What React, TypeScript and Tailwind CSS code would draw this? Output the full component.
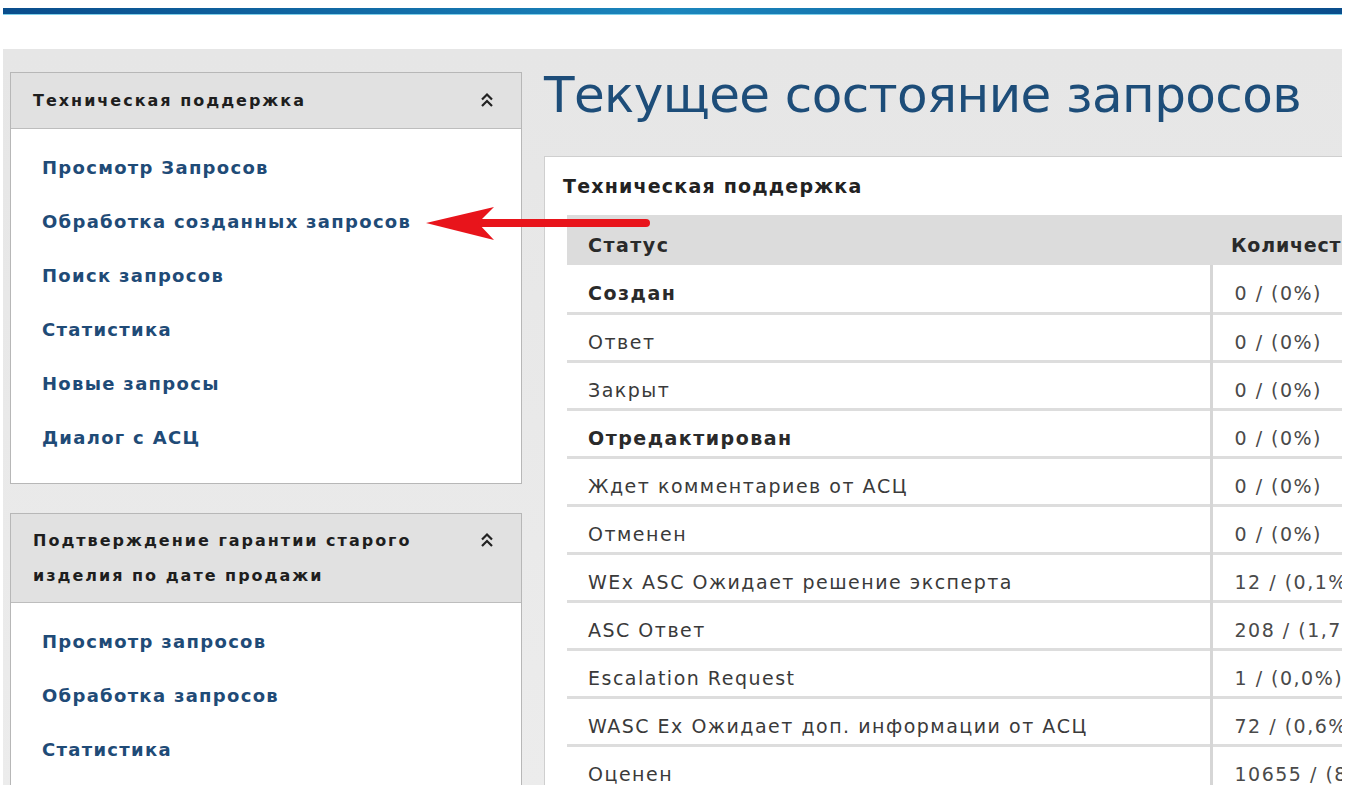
import React from 'react';

const supportLinks = [
  'Просмотр Запросов',
  'Обработка созданных запросов',
  'Поиск запросов',
  'Статистика',
  'Новые запросы',
  'Диалог с АСЦ',
];

const warrantyLinks = ['Просмотр запросов', 'Обработка запросов', 'Статистика'];

const rows: { status: string; count: string; bold?: boolean }[] = [
  { status: 'Создан', count: '0 / (0%)', bold: true },
  { status: 'Ответ', count: '0 / (0%)' },
  { status: 'Закрыт', count: '0 / (0%)' },
  { status: 'Отредактирован', count: '0 / (0%)', bold: true },
  { status: 'Ждет комментариев от АСЦ', count: '0 / (0%)' },
  { status: 'Отменен', count: '0 / (0%)' },
  { status: 'WEx ASC Ожидает решение эксперта', count: '12 / (0,1%)' },
  { status: 'ASC Ответ', count: '208 / (1,7%)' },
  { status: 'Escalation Request', count: '1 / (0,0%)' },
  { status: 'WASC Ex Ожидает доп. информации от АСЦ', count: '72 / (0,6%)' },
  { status: 'Оценен', count: '10655 / (87,1%)' },
];

function Collapse() {
  return (
    <svg width="14" height="16" viewBox="0 0 14 16" className="shrink-0">
      <polyline points="2,7.5 7,2.5 12,7.5" fill="none" stroke="#222" strokeWidth="2.2" />
      <polyline points="2,14 7,9 12,14" fill="none" stroke="#222" strokeWidth="2.2" />
    </svg>
  );
}

function SideBox({ title, links, headerClass }: { title: React.ReactNode; links: string[]; headerClass: string }) {
  return (
    <div className="bg-white border border-[#b7b7b7]">
      <div className={`bg-[#e1e1e1] border-b border-[#bdbdbd] flex justify-between pl-[22px] pr-[27px] ${headerClass}`}>
        <div className="text-[16px] font-bold text-[#1e1e1e] leading-[35px] tracking-[2px]">{title}</div>
        <div className="pt-[9px]">
          <Collapse />
        </div>
      </div>
      <ul className="pl-[31px] pt-[11px] pb-[19px]">
        {links.map((l) => (
          <li key={l} className="h-[54px] flex items-center">
            <a href="#" className="text-[18px] font-bold text-[#1f4b77] tracking-[1.3px]">
              {l}
            </a>
          </li>
        ))}
      </ul>
    </div>
  );
}

export default function App() {
  return (
    <div className="min-h-screen bg-white font-['DejaVu_Sans',sans-serif] relative overflow-hidden">
      {/* top bar */}
      <div className="pt-[8px] px-[3px]">
        <div className="h-[7px] bg-gradient-to-r from-[#0a4d8c] via-[#1b86bd] to-[#0a4d8c] border-b border-[#7fd0ea]" />
      </div>
      <div className="h-[34px]" />

      <div className="mx-[3px] w-[1339px] bg-gradient-to-b from-[#e6e6e6] to-[#ececec] flex gap-[22px] pl-[7px] pt-[23px] h-[740px]">
        <aside className="w-[512px] shrink-0 flex flex-col gap-[29px]">
          <SideBox title="Техническая поддержка" links={supportLinks} headerClass="py-[10px]" />
          <SideBox
            title={
              <>
                Подтверждение гарантии старого
                <br />
                изделия по дате продажи
              </>
            }
            links={warrantyLinks}
            headerClass="py-[9px]"
          />
        </aside>

        <main className="flex-1 min-w-0">
          <h1 className="text-[50px] leading-[56px] text-[#1d4d79] tracking-[-0.6px] mt-[-5px]">
            Текущее состояние запросов
          </h1>

          <div className="mt-[33px] bg-white border border-[#cfcfcf] border-r-0 pl-[22px] pb-4 overflow-hidden">
            <div className="h-[58px] flex items-center">
              <span className="text-[19px] font-bold text-[#222] ml-[-4px] tracking-[1.2px]">Техническая поддержка</span>
            </div>
            <table className="table-fixed w-[860px] border-collapse text-[19px] text-[#3a3a3a] tracking-[1.5px]">
              <colgroup>
                <col className="w-[644px]" />
                <col className="w-[216px]" />
              </colgroup>
              <thead>
                <tr className="bg-[#dcdcdc] h-[50px]">
                  <th className="text-left font-bold pl-[21px] pt-[10px] text-[#2a2a2a]">Статус</th>
                  <th className="text-left font-bold pl-[20px] pt-[10px] text-[#2a2a2a] whitespace-nowrap tracking-[0.8px]">Количество</th>
                </tr>
              </thead>
              <tbody>
                {rows.map((r) => (
                  <tr key={r.status} className="h-[48px] border-b-[3px] border-[#dddddd]">
                    <td className={`pl-[21px] pt-[10px] border-r-[3px] border-[#d6d6d6] ${r.bold ? 'font-bold text-[#2a2a2a]' : ''}`}>
                      {r.status}
                    </td>
                    <td className="pl-[22px] pt-[10px] whitespace-nowrap text-[#4a4a4a]">{r.count}</td>
                  </tr>
                ))}
              </tbody>
            </table>
          </div>
        </main>
      </div>

      {/* red pointer arrow */}
      <svg className="absolute left-[420px] top-[200px]" width="232" height="44" viewBox="0 0 232 44">
        <path d="M56 23 L226 23" stroke="#e8141b" strokeWidth="8" strokeLinecap="round" fill="none" />
        <path d="M6 23 L74 7 L58 23 L74 40 Z" fill="#e8141b" />
      </svg>
    </div>
  );
}
